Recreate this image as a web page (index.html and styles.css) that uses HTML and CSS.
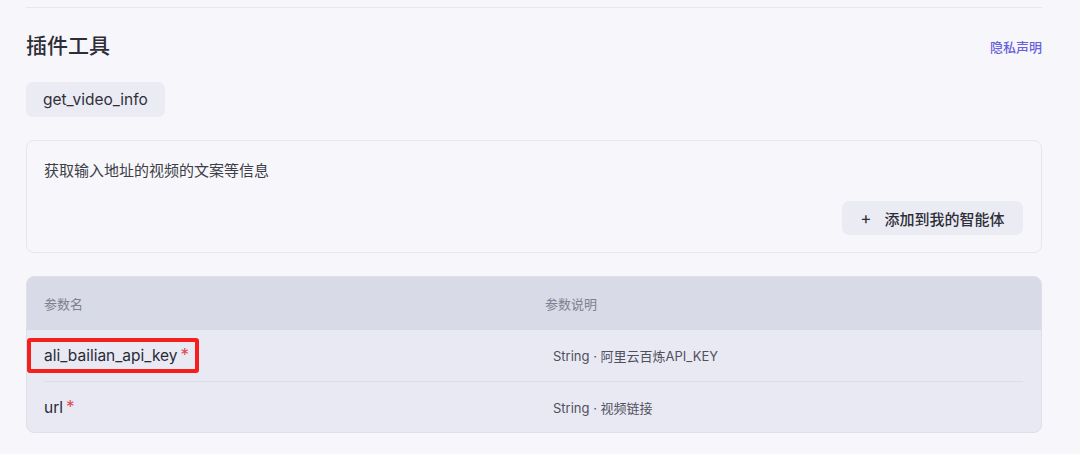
FILE: index.html
```html
<!DOCTYPE html>
<html lang="zh">
<head>
<meta charset="utf-8">
<link rel="stylesheet" href="styles.css">
</head>
<body>
<div class="page">
  <div class="topline"></div>
  <div class="header">
    <h2 class="title">插件工具</h2>
    <a class="privacy">隐私声明</a>
  </div>
  <div class="tags"><span class="tag">get_video_info</span></div>
  <div class="card">
    <p class="desc">获取输入地址的视频的文案等信息</p>
    <div class="actions"><button class="add"><span class="plus">+</span>添加到我的智能体</button></div>
  </div>
  <div class="table">
    <div class="thead">
      <div class="col-name">参数名</div>
      <div class="col-desc">参数说明</div>
    </div>
    <div class="row">
      <div class="col-name"><span class="hl">ali_bailian_api_key<span class="req">*</span></span></div>
      <div class="col-desc val">String · 阿里云百炼API_KEY</div>
    </div>
    <div class="row">
      <div class="col-name">url<span class="req">*</span></div>
      <div class="col-desc val">String · 视频链接</div>
    </div>
  </div>
</div>
</body>
</html>
```
FILE: styles.css
```css
* { box-sizing: border-box; }
html, body { margin: 0; padding: 0; background: #f7f7fb; }
body {
  font-family: Inter, "Noto Sans CJK SC", sans-serif;
  color: #2b2b36;
  width: 1080px;
  height: 454px;
  overflow: hidden;
}
.page {
  width: 1016px;
  margin-left: 26px;
  padding-top: 7px;
  display: flex;
  flex-direction: column;
}
.topline { height: 1px; background: #e6e6ee; }
.header {
  display: flex;
  justify-content: space-between;
  align-items: center;
  margin-top: 23px;
  height: 30px;
}
.title {
  margin: 0;
  font-size: 21px;
  font-weight: 500;
  line-height: 30px;
  color: #2e2e38;
}
.privacy {
  font-size: 13px;
  font-weight: 500;
  color: #6a5fdc;
  line-height: 18px;
  padding-top: 2px;
}
.tags { margin-top: 21px; display: flex; }
.tag {
  display: inline-flex;
  align-items: center;
  height: 35px;
  padding: 0 17px;
  background: #ebebf3;
  border-radius: 7px;
  font-size: 15.5px;
  color: #30303a;
}
.card {
  margin-top: 23px;
  height: 113px;
  border: 1px solid #e6e6ee;
  border-radius: 8px;
  padding: 19px 18px 17px 17px;
  display: flex;
  flex-direction: column;
  justify-content: space-between;
}
.desc {
  margin: 0;
  font-size: 15px;
  line-height: 22px;
  color: #3e3e48;
}
.actions { display: flex; justify-content: flex-end; }
.add {
  height: 34px;
  width: 181px;
  border: none;
  border-radius: 7px;
  background: #ebebf3;
  font-family: inherit;
  font-size: 15px;
  font-weight: 500;
  color: #2e2e38;
  display: flex;
  align-items: center;
  justify-content: center;
  padding: 0;
}
.plus { font-weight: 400; font-size: 17px; margin-right: 13px; }
.table {
  margin-top: 23px;
  border: 1px solid #dfdfe9;
  border-radius: 8px;
  overflow: hidden;
  background: #e9e9f4;
}
.thead {
  display: flex;
  align-items: center;
  height: 53px;
  background: #d8dae7;
  font-size: 13px;
  color: #80808e;
}
.thead .col-name { padding-left: 17px; width: 518px; }
.row {
  display: flex;
  align-items: center;
  height: 51px;
  margin: 0 18px 0 17px;
  font-size: 15.5px;
  color: #2a2a35;
}
.row + .row { border-top: 1px solid #dddde8; }
.col-name { flex: none; }
.row .col-name { width: 501px; }
.col-desc { flex: 1; }
.val { font-size: 13px; color: #50505c; padding-left: 8px; }
.req { color: #e0484f; margin-left: 3px; font-size: 17px; line-height: 15px; }
.hl {
  display: inline-block;
  margin-left: -17px;
  padding: 4px 6px 4px 13px;
  line-height: 19px;
  border: 4px solid #f5201c;
  border-radius: 3px;
}
```
